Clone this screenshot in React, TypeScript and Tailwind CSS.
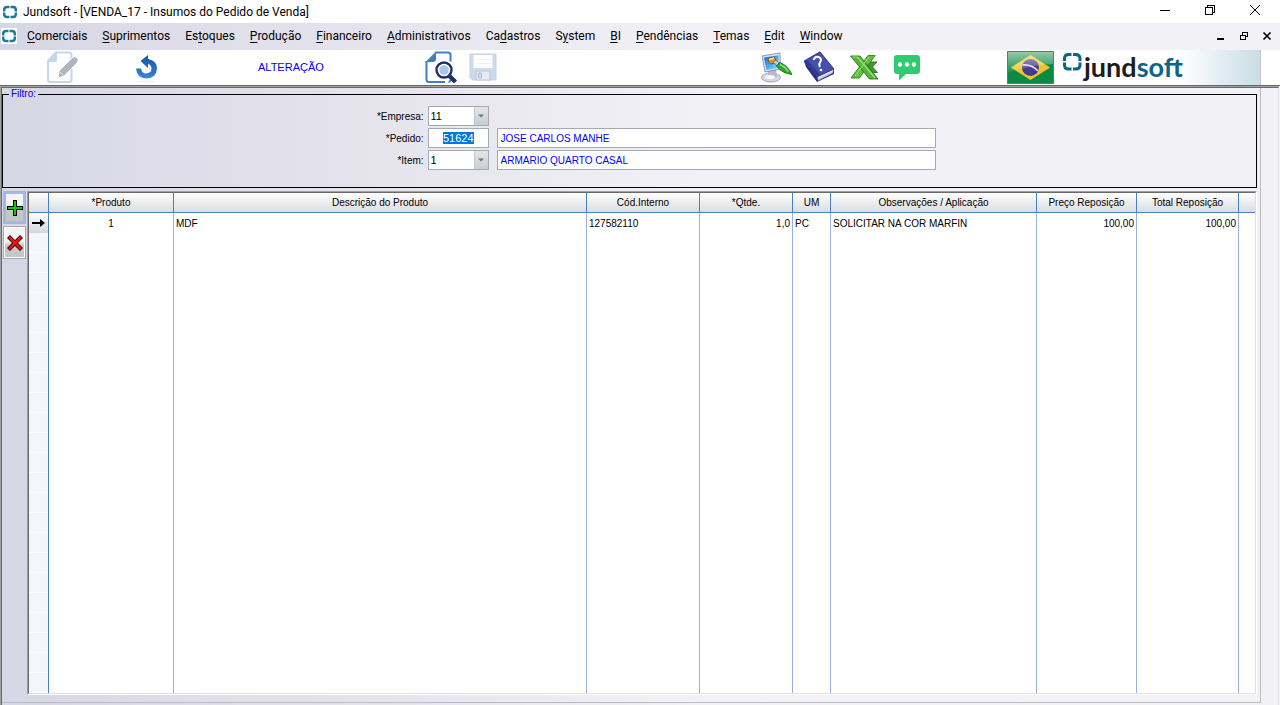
import { useEffect, useRef, type ReactNode } from "react";

const MENU: ReadonlyArray<[before: string, key: string, after: string]> = [
  ["", "C", "omerciais"],
  ["", "S", "uprimentos"],
  ["Es", "t", "oques"],
  ["", "P", "rodução"],
  ["", "F", "inanceiro"],
  ["", "A", "dministrativos"],
  ["Ca", "d", "astros"],
  ["S", "y", "stem"],
  ["", "B", "I"],
  ["", "P", "endências"],
  ["", "T", "emas"],
  ["", "E", "dit"],
  ["", "W", "indow"],
];

type Column = {
  title: string;
  width: string;
  align: string;
};

// Descrição has no width of its own: it takes what the others leave.
const COLUMNS: ReadonlyArray<Column> = [
  { title: "*Produto", width: "w-[125px]", align: "text-center" },
  { title: "Descrição do Produto", width: "", align: "text-left" },
  { title: "Cód.Interno", width: "w-[113px]", align: "text-left" },
  { title: "*Qtde.", width: "w-[93px]", align: "text-right" },
  { title: "UM", width: "w-[38px]", align: "text-left" },
  { title: "Observações / Aplicação", width: "w-[206px]", align: "text-left" },
  { title: "Preço Reposição", width: "w-[100px]", align: "text-right" },
  { title: "Total Reposição", width: "w-[102px]", align: "text-right" },
];

const ROWS: ReadonlyArray<ReadonlyArray<string>> = [
  ["1", "MDF", "127582110", "1,0", "PC", "SOLICITAR NA COR MARFIN", "100,00", "100,00"],
];

export default function App() {
  return (
    <div className="flex min-h-screen flex-col bg-[#f2f1f6] font-['Liberation_Sans',Arial,sans-serif] text-[10px] text-black">
      <TitleBar />
      <MenuBar />
      <Toolbar />
      <main className="mr-px flex flex-1 flex-col border-t border-l border-[#a0a0a0] bg-linear-to-r from-[#d7d6e4] to-[#f2f1f6] to-55%">
        <div className="flex flex-1 flex-col border-t border-r border-l border-t-[#696969] border-r-[#e2e2e2] border-l-[#696969]">
          <div className="mr-[17px] mb-0.5 flex flex-1 flex-col border-r border-b border-[#bcbcbc] pr-[3px] pb-[7px]">
            <Filter />
            <div className="mt-[3px] flex flex-1">
              <RowButtons />
              <ItemsGrid />
            </div>
          </div>
        </div>
      </main>
    </div>
  );
}

function TitleBar() {
  return (
    <header className="flex h-[23px] items-center bg-white pl-0.5 font-[Roboto,sans-serif]">
      <RingIcon className="h-4 w-4" />
      <h1 className="ml-[5px] text-xs">Jundsoft - [VENDA_17 - Insumos do Pedido de Venda]</h1>
      <div className="mr-[19px] ml-auto flex items-center gap-[33px] pb-1">
        <button type="button" aria-label="Minimizar">
          <svg className="h-3 w-3" viewBox="0 0 12 12" shapeRendering="crispEdges">
            <path d="M1 6.500h10" stroke="#000" />
          </svg>
        </button>
        <button type="button" aria-label="Restaurar">
          <svg className="h-3 w-3" viewBox="0 0 12 12" fill="none" stroke="#000" shapeRendering="crispEdges">
            <path d="M1.500 3.500h7v7h-7zM3.500 3V1.500h7v7H9" />
          </svg>
        </button>
        <button type="button" aria-label="Fechar">
          <svg className="h-3 w-3" viewBox="0 0 12 12" stroke="#000">
            <path d="M1 1l10 10M11 1L1 11" />
          </svg>
        </button>
      </div>
    </header>
  );
}

function MenuBar() {
  return (
    <nav className="flex h-[27px] items-center bg-linear-to-r from-[#d7d6e4] to-[#f2f1f6] to-55% pb-0.5 pl-px font-[Roboto,sans-serif] text-xs">
      <span className="bg-white">
        <RingIcon className="h-4 w-4" />
      </span>
      <ul className="ml-2.5 flex gap-[15px]">
        {MENU.map(([before, key, after]) => (
          <li key={before + key + after}>
            <button type="button" className="whitespace-nowrap">
              {before}
              <span className="underline underline-offset-2">{key}</span>
              {after}
            </button>
          </li>
        ))}
      </ul>
      <div className="mr-2 ml-auto flex items-center gap-[13px]">
        <button type="button" aria-label="Minimizar janela">
          <svg className="h-2.5 w-2.5" viewBox="0 0 10 10" shapeRendering="crispEdges">
            <path d="M1 8h7" stroke="#000" strokeWidth="2" />
          </svg>
        </button>
        <button type="button" aria-label="Restaurar janela">
          <svg className="h-2.5 w-2.5" viewBox="0 0 10 10" fill="none" stroke="#000" shapeRendering="crispEdges">
            <path d="M1.500 4.500h5v4h-5zM1 4h6M3.500 4V1.500h5v4H7M3 1.500h6" />
          </svg>
        </button>
        <button type="button" aria-label="Fechar janela">
          <svg className="h-2.5 w-2.5" viewBox="0 0 10 10" stroke="#000" strokeWidth="1.700">
            <path d="M1.500 1.500l7 7M8.500 1.500l-7 7" />
          </svg>
        </button>
      </div>
    </nav>
  );
}

function Toolbar() {
  return (
    <div className="flex h-9 items-center border-b border-[#646864] bg-white">
      <ToolButton label="Editar" className="ml-[46px]">
        <EditIcon />
      </ToolButton>
      <ToolButton label="Desfazer" className="ml-[52px]">
        <UndoIcon />
      </ToolButton>
      <p className="ml-24 w-[65px] text-[11px] text-[#0000ff]">ALTERAÇÃO</p>
      <ToolButton label="Pesquisar" className="ml-[102px]">
        <SearchIcon />
      </ToolButton>
      <ToolButton label="Salvar" className="ml-3">
        <SaveIcon />
      </ToolButton>
      <div className="ml-auto flex items-center gap-[11px]">
        <ToolButton label="Aparência">
          <PaintIcon />
        </ToolButton>
        <ToolButton label="Ajuda">
          <BookIcon />
        </ToolButton>
        <ToolButton label="Exportar para Excel" className="ml-1">
          <ExcelIcon />
        </ToolButton>
        <ToolButton label="Mensagens">
          <ChatIcon />
        </ToolButton>
      </div>
      <button type="button" aria-label="Idioma: Português" className="ml-[86px]">
        <FlagIcon />
      </button>
      <Brand />
    </div>
  );
}

function ToolButton({
  label,
  className = "",
  children,
}: {
  label: string;
  className?: string;
  children: ReactNode;
}) {
  return (
    <button type="button" aria-label={label} className={`pb-px ${className}`}>
      {children}
    </button>
  );
}

function Brand() {
  return (
    <div className="mr-[19px] ml-2 flex h-full w-[199px] border-r border-[#c4c4c4] bg-linear-to-r from-white from-60% via-[#e3edf2] via-80% to-[#cbdde6]">
      <svg className="mt-0.5 h-5 w-5 shrink-0" viewBox="0 0 20 20" fill="none" stroke="#0c6489" strokeWidth="3">
        <path d="M9.500 2.500H6.500Q2.500 2.500 2.500 6.500V9M11 2.500h2.500Q18 2.500 18 6.500V9M2.500 10.500v2.500Q2.500 17 6.500 17H9.500M18 10.500v2.500Q18 17 13.500 17H11" />
      </svg>
      <span className="mt-px ml-0.5 font-[Lato,sans-serif] text-[27px] leading-8 font-bold text-[#1c1c1c]">
        jund<span className="text-[#0c6489]">soft</span>
      </span>
    </div>
  );
}

function Filter() {
  const pedidoRef = useRef<HTMLInputElement>(null);

  // The order number comes up focused, ready to be typed over.
  useEffect(() => {
    pedidoRef.current?.focus();
    pedidoRef.current?.select();
  }, []);

  return (
    <fieldset className="border border-black pb-[17px]">
      <legend className="ml-1.5 px-0.5 leading-3 text-[#0000ff]">Filtro:</legend>
      <div className="grid grid-cols-[4fr_61px_439px_3fr] items-center gap-x-2 gap-y-0.5 pt-1.5">
        <FieldLabel htmlFor="empresa">*Empresa:</FieldLabel>
        <Combo id="empresa" value="11" />
        <span className="col-span-2" />

        <FieldLabel htmlFor="pedido">*Pedido:</FieldLabel>
        <input
          id="pedido"
          ref={pedidoRef}
          defaultValue="51624"
          className="h-5 w-full border border-[#a5abb3] bg-white pr-3.5 text-right text-[11px] outline-none selection:bg-[#0078d7] selection:text-white"
        />
        <ReadOnlyField label="Cliente" value="JOSE CARLOS MANHE" />
        <span />

        <FieldLabel htmlFor="item">*Item:</FieldLabel>
        <Combo id="item" value="1" />
        <ReadOnlyField label="Descrição do item" value="ARMARIO QUARTO CASAL" />
        <span />
      </div>
    </fieldset>
  );
}

function FieldLabel({ htmlFor, children }: { htmlFor: string; children: ReactNode }) {
  return (
    <label htmlFor={htmlFor} className="-mr-1 text-right">
      {children}
    </label>
  );
}

function Combo({ id, value }: { id: string; value: string }) {
  return (
    <div className="relative">
      <select
        id={id}
        defaultValue={value}
        className="block h-5 w-full appearance-none border border-[#a5abb3] bg-white pl-0.5 text-[11px] outline-none"
      >
        <option>{value}</option>
      </select>
      <span className="pointer-events-none absolute top-px right-px flex h-[18px] w-3.5 items-center justify-center border-l border-[#c3c7cc] bg-linear-to-b from-[#e4e6e9] to-[#c9cdd2]">
        <svg className="h-1 w-1.5" viewBox="0 0 6 4">
          <path d="M0 .5h6L3 3.500z" fill="#6f747a" />
        </svg>
      </span>
    </div>
  );
}

function ReadOnlyField({ label, value }: { label: string; value: string }) {
  return (
    <input
      readOnly
      aria-label={label}
      value={value}
      className="h-5 w-full border border-[#a5abb3] bg-white px-[3px] text-[#0000ff] outline-none"
    />
  );
}

function RowButtons() {
  return (
    <div className="flex w-[25px] flex-col gap-0.5 pl-px">
      <button
        type="button"
        aria-label="Incluir item"
        className="flex h-[33px] w-[23px] items-center justify-center border border-[#b4b4b4] bg-linear-to-b from-[#f4f4f4] from-40% to-[#c6c6c6] to-60% inset-ring-2 inset-ring-[#9dbbe3]"
      >
        <svg className="h-4 w-4" viewBox="0 0 16 16" shapeRendering="crispEdges">
          <path d="M6 0h4v6h6v4h-6v6H6v-6H0V6h6z" fill="#000" />
          <path d="M7 1h2v6h6v2H9v6H7V9H1V7h6z" fill="#13c413" />
        </svg>
      </button>
      <button
        type="button"
        aria-label="Excluir item"
        className="flex h-[33px] w-[23px] items-center justify-center border border-[#a8a8a8] bg-linear-to-b from-[#f4f4f4] from-45% to-[#c6c6c6] to-60% inset-ring inset-ring-white"
      >
        <svg className="h-4 w-4" viewBox="0 0 16 16">
          <path d="M1.500 1.500l13 13M14.500 1.500l-13 13" stroke="#000" strokeWidth="4.200" />
          <path d="M2 2l12 12M14 2L2 14" stroke="#f40f0f" strokeWidth="2.500" />
        </svg>
      </button>
    </div>
  );
}

function ItemsGrid() {
  return (
    <div className="flex flex-1 border border-t-[#a0a0a0] border-r-white border-b-white border-l-[#a0a0a0]">
      <div className="flex flex-1 border border-t-[#696969] border-r-[#e0e0e0] border-b-[#e0e0e0] border-l-[#696969] bg-white">
        <table className="w-full table-fixed border-separate border-spacing-0">
          <colgroup>
            <col className="w-5" />
            {COLUMNS.map((c) => (
              <col key={c.title} className={c.width} />
            ))}
            <col className="w-4" />
          </colgroup>
          <thead className="bg-linear-to-b from-white to-[#d9dadf]">
            <tr className="h-5">
              <th className="border-r border-b border-[#4a80c6] p-0" />
              {COLUMNS.map((c) => (
                <th
                  key={c.title}
                  scope="col"
                  className="border-r border-b border-[#4a80c6] p-0 text-center font-normal whitespace-nowrap"
                >
                  {c.title}
                </th>
              ))}
              <th className="border-b border-[#4a80c6] p-0" />
            </tr>
          </thead>
          <tbody>
            {ROWS.map((row) => (
              <tr key={row[0]} className="h-5">
                <td className="border-r border-[#4a80c6] bg-linear-to-b from-white to-[#d4d6da] p-0">
                  <svg className="mx-auto h-3 w-3.5" viewBox="0 0 14 12">
                    <path d="M0 5h8V2l5 4-5 4V7H0z" fill="#000" />
                  </svg>
                </td>
                {row.map((value, i) => (
                  <td
                    key={COLUMNS[i].title}
                    className={`border-r border-[#94b3dc] px-0.5 py-0 whitespace-nowrap ${COLUMNS[i].align}`}
                  >
                    {value}
                  </td>
                ))}
                <td className="p-0" />
              </tr>
            ))}
            <tr>
              <td className="border-r border-[#4a80c6] bg-[repeating-linear-gradient(#f3f7fc_0_19px,#ffffff_19px_20px)] p-0" />
              {COLUMNS.map((c) => (
                <td key={c.title} className="border-r border-[#94b3dc] p-0" />
              ))}
              <td className="p-0" />
            </tr>
          </tbody>
        </table>
      </div>
    </div>
  );
}

function RingIcon({ className }: { className: string }) {
  return (
    <svg className={className} viewBox="0 0 16 16" fill="none" stroke="#1b7897" strokeWidth="2.400">
      <path d="M7.500 3H5Q2.200 3 2.200 5.800V7.500M8.500 3H11q2.800 0 2.800 2.800V7.500M2.200 8.500v1.700Q2.200 13 5 13h2.500M13.800 8.500v1.700Q13.800 13 11 13H8.500" />
    </svg>
  );
}

function EditIcon() {
  return (
    <svg className="h-8 w-8" viewBox="0 0 32 32">
      <path d="M10 1.500h13Q25.500 1.500 25.500 4v25q0 2-2.500 2H4.500q-2.500 0-2.500-2V9.500z" fill="#fff" stroke="#c7d5ea" strokeWidth="2" />
      <path d="M1 11L11 .5v8q0 2.500-2.500 2.500z" fill="#c7d5ea" />
      <path d="M26 7q2-2 4-1l2 2q1 1-1 4L18 25l-6 2 1-7z" fill="#aeb5be" stroke="#fff" strokeWidth="1" />
      <path d="M13.500 20.500l4 4" stroke="#e8eaee" />
    </svg>
  );
}

function UndoIcon() {
  return (
    <svg className="h-8 w-8" viewBox="0 0 32 32">
      <defs>
        <linearGradient id="undo" x1="0" x2="0" y1="0" y2="1">
          <stop offset="0" stopColor="#0c56a4" />
          <stop offset="1" stopColor="#3a86d4" />
        </linearGradient>
      </defs>
      <path d="M18 4v4q9 1.500 9 9.500-.7 9.500-10.500 10Q7 27 6 17.500h5q1 5 5 5 5.500-.3 5.500-5-.2-4-3.500-4.500v4L10.500 10z" fill="url(#undo)" />
      <ellipse cx="16" cy="30.500" rx="9" ry="1" fill="#f1f1f1" />
    </svg>
  );
}

function SearchIcon() {
  return (
    <svg className="h-8 w-8" viewBox="0 0 32 32">
      <path d="M10 1.500h13q2.500 0 2.500 2.500v6.500M20 31H4q-2.500 0-2.500-2.500V10M25.500 29v.5Q25 31 23.500 31" fill="none" stroke="#3f80c4" strokeWidth="2" />
      <path d="M.5 11L11 .5V8q0 3-3 3z" fill="#3f80c4" />
      <path d="M24.500 25l6 6" stroke="#232c66" strokeWidth="4.200" />
      <circle cx="19" cy="19" r="7.500" fill="#fff" stroke="#232c66" strokeWidth="2.400" />
      <circle cx="19" cy="19" r="4.800" fill="#a5c8ec" />
    </svg>
  );
}

function SaveIcon() {
  return (
    <svg className="h-7 w-7" viewBox="0 0 28 28">
      <path d="M1 1h26v26H3.500L1 24.500z" fill="#cddaec" stroke="#c3d1e5" />
      <path d="M4.500 2h19v13h-19z" fill="#fff" />
      <path d="M6 6.500h16M6 10.500h16" stroke="#eef2f7" />
      <path d="M7 18h14v9H7z" fill="#e6ebf3" stroke="#b9c8dd" />
      <path d="M9.500 20h3v5h-3z" fill="#cddaec" stroke="#adbfd8" />
    </svg>
  );
}

function PaintIcon() {
  return (
    <svg className="h-8 w-8" viewBox="0 0 32 32">
      <defs>
        <linearGradient id="screen" x1="0" x2="1" y1="0" y2="1">
          <stop offset="0" stopColor="#1668d8" />
          <stop offset="1" stopColor="#7fe4fb" />
        </linearGradient>
      </defs>
      <ellipse cx="11" cy="26.500" rx="9.500" ry="4.500" fill="#d6d7e6" stroke="#9698ac" strokeWidth=".8" />
      <path d="M8 19l8-1 1 8q-5 3-9 0z" fill="#b8bacb" />
      <ellipse cx="10" cy="26" rx="5" ry="2" fill="#f8f8fc" />
      <path d="M2 5l18-3 .5 16L5 21z" fill="#dfe2f2" stroke="#7c7f9a" strokeWidth=".8" />
      <path d="M4 6.500l14.500-2.300.4 12.500L6.300 19z" fill="url(#screen)" />
      <path d="M8 7.500l6-1.500 3 5-6 2q-3-1-3-5.500z" fill="#d9962d" stroke="#6b4512" strokeWidth=".8" />
      <path d="M9 8.500l5-1.500" stroke="#fae39a" strokeWidth="1.600" />
      <path d="M13 11l3-1.800 4 4-2.500 2z" fill="#c8ccd2" stroke="#555" strokeWidth=".6" />
      <path d="M16.500 15l3-3.500q8 2.500 12.500 12-10-1-15.500-8.500z" fill="#2ca52c" stroke="#14641a" strokeWidth=".8" />
      <path d="M20 13.500q5.500 2.500 8.500 7" stroke="#8be36f" strokeWidth="1.400" fill="none" />
    </svg>
  );
}

function BookIcon() {
  return (
    <svg className="h-8 w-8" viewBox="0 0 32 32">
      <path d="M1 10l2 6 11 15 17-8v-5L14 25z" fill="#2a307f" />
      <path d="M14.500 25.500l16-7.500-.8 4L15 29.500z" fill="#e3e5f0" stroke="#8186ad" strokeWidth=".5" />
      <path d="M15 28l15-7" stroke="#a9adc8" strokeWidth=".7" />
      <path d="M1 10L17 .8 31 18 14.500 25.500z" fill="#4650ab" stroke="#252b72" strokeWidth=".8" />
      <path d="M1.500 10.500L4 9l13.500 15-3 1.300z" fill="#323a91" />
      <path d="M10.500 9q1.500-4 5-3 4 1.500 1.500 5.500-1.500 2 0 4.500" fill="none" stroke="#fff" strokeWidth="2" />
      <circle cx="18" cy="19" r="1.300" fill="#fff" />
    </svg>
  );
}

function ExcelIcon() {
  return (
    <svg className="h-8 w-8" viewBox="2 1 32 32">
      <path d="M18 12h11l-4.500 5 5 5.500H18z" fill="#3f9b33" stroke="#1c641a" strokeWidth=".8" />
      <path d="M27 5.500h-7L3 28h8.500z" fill="#62bf3c" stroke="#1e7421" strokeWidth=".8" />
      <path d="M2.500 6H12l18 23h-8.500z" fill="#54b636" stroke="#1a681c" strokeWidth=".8" />
      <path d="M4.500 7h5l17.500 21" fill="none" stroke="#a6e07e" strokeWidth="1.200" />
      <path d="M21 7L7 26" stroke="#a6e07e" strokeWidth="1" />
    </svg>
  );
}

function ChatIcon() {
  return (
    <svg className="h-7 w-7" viewBox="0 0 28 28">
      <path d="M4 2h20q3 0 3 3v13q0 3-3 3H13l-7 6.500V21H4q-3 0-3-3V5q0-3 3-3z" fill="#2ecc71" />
      <g fill="#fff">
        <circle cx="7" cy="11.500" r="2.200" />
        <circle cx="14" cy="11.500" r="2.200" />
        <circle cx="21" cy="11.500" r="2.200" />
      </g>
    </svg>
  );
}

function FlagIcon() {
  return (
    <svg className="h-[33px] w-[47px]" viewBox="0 0 47 33">
      <defs>
        <linearGradient id="gloss" x1="0" x2="0" y1="0" y2="1">
          <stop offset="0" stopColor="#fff" stopOpacity=".55" />
          <stop offset="1" stopColor="#fff" stopOpacity=".05" />
        </linearGradient>
      </defs>
      <path d="M.5.5h46v32H.5z" fill="#0c8a44" stroke="#3d8d5e" />
      <path d="M23.500 4L43 16.500 23.500 29 4 16.500z" fill="#eec52f" />
      <circle cx="23.500" cy="16.500" r="8.500" fill="#453a8c" />
      <path d="M15.500 14q9-1 15.500 6" fill="none" stroke="#dcdcea" strokeWidth="1.600" />
      <path d="M1 1h45v12Q24 14 1 22z" fill="url(#gloss)" />
    </svg>
  );
}
